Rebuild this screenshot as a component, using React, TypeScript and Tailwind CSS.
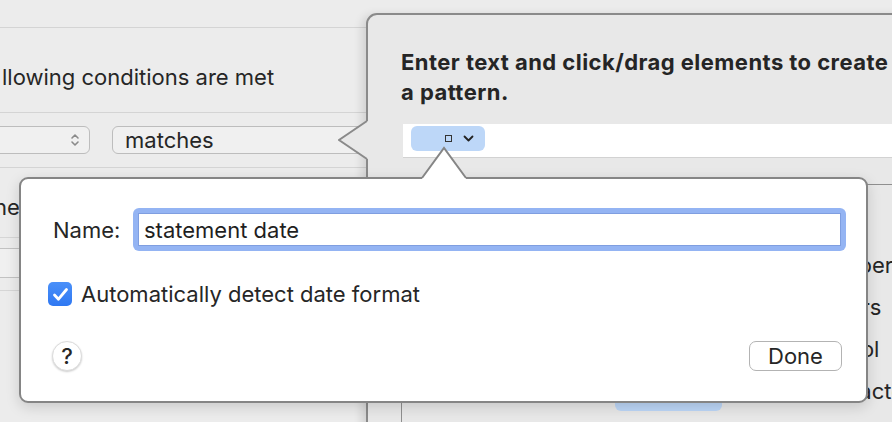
import React from 'react';

function Stepper() {
  return (
    <svg width="10" height="16" viewBox="0 0 10 16" fill="none" stroke="#8a8a8a" strokeWidth="1.6" strokeLinecap="round" strokeLinejoin="round">
      <path d="M2 6 L5 3 L8 6" />
      <path d="M2 10 L5 13 L8 10" />
    </svg>
  );
}

function PopoverOne() {
  return (
    <div className="absolute left-[366px] top-[13px] w-[560px] h-[430px] rounded-tl-[11px] border-2 border-[#8a8a8a] bg-[#e8e8e8] shadow-[-4px_2px_10px_rgba(0,0,0,0.12)]">
      <svg className="absolute left-[-30px] top-[105px]" width="34" height="40" viewBox="0 0 34 40">
        <polygon points="29,1 1,20 29,39 34,39 34,1" fill="#e8e8e8" />
        <polyline points="29,1 1,20 29,39" fill="none" stroke="#8a8a8a" strokeWidth="2" />
      </svg>
      <div className="pl-[33px] pt-[32px]">
        <div className="text-[22px] leading-[30px] font-bold tracking-[0.45px] text-[#252525] whitespace-nowrap">
          Enter text and click/drag elements to create
          <br />
          a pattern.
        </div>
        <div className="ml-[2px] mt-[17px] h-[34px] bg-white border-b border-[#d2d2d2] pl-[8px] pt-[2px]">
          <div className="w-[74px] h-[25px] rounded-[6px] bg-[#bdd7f8] flex items-center pl-[34px] gap-[11px]">
            <div className="w-[7px] h-[7px] border border-[#333]" />
            <svg width="11" height="7" viewBox="0 0 11 7" fill="none" stroke="#222" strokeWidth="1.8" strokeLinecap="round" strokeLinejoin="round">
              <path d="M1.5 1.5 L5.5 5.5 L9.5 1.5" />
            </svg>
          </div>
        </div>
        <div className="mt-[26px] h-[260px] border-l border-t border-[#8f8f8f] flex items-start">
          <div className="ml-[213px] mt-[200px] w-[110px] h-[26px] rounded-[6px] bg-[#bdd7f8]" />
          <div className="ml-[88px] pt-[59px] text-[22px] leading-[42px] text-[#252525] whitespace-nowrap">
            <div>Number</div>
            <div>Letters</div>
            <div className="-ml-[8px]">Symbol</div>
            <div>Characters</div>
          </div>
        </div>
      </div>
    </div>
  );
}

function PopoverTwo() {
  return (
    <div className="absolute left-[19px] top-[177px] w-[849px] h-[226px] rounded-[9px] border-2 border-[#858585] bg-white shadow-[0_4px_14px_rgba(0,0,0,0.15)]">
      <svg className="absolute left-[399px] top-[-33px]" width="48" height="37" viewBox="0 0 48 37">
        <polygon points="2,32 24,2 46,32 46,37 2,37" fill="#ffffff" />
        <polyline points="2,32 24,2 46,32" fill="none" stroke="#858585" strokeWidth="2" />
      </svg>
      <div className="pt-[29px] pl-[32px] flex items-center">
        <div className="w-[80px] text-[22px] leading-[26px] text-[#262626]">Name:</div>
        <div className="w-[713px] h-[43px] rounded-[6px] bg-[#94b4f3] p-[5px]">
          <div className="h-full bg-white border border-[#7f9ee0] pl-[5px] flex items-center text-[22px] leading-[26px] text-[#1f1f1f]">
            statement date
          </div>
        </div>
      </div>
      <div className="mt-[31px] ml-[27px] flex items-center gap-[9px]">
        <div className="w-[24px] h-[24px] rounded-[5px] bg-gradient-to-b from-[#4a90f9] to-[#2f78f2] flex items-center justify-center">
          <svg width="17" height="15" viewBox="0 0 17 15" fill="none" stroke="#ffffff" strokeWidth="2.8" strokeLinecap="round" strokeLinejoin="round">
            <path d="M2.5 8 L6.5 12.2 L14.5 2.5" />
          </svg>
        </div>
        <div className="text-[22px] leading-[24px] text-[#262626]">Automatically detect date format</div>
      </div>
      <div className="mt-[35px] pl-[31px] pr-[24px] flex items-center justify-between">
        <div className="w-[30px] h-[30px] rounded-full bg-white border border-[#dcdcdc] shadow-[0_1px_2px_rgba(0,0,0,0.2)] flex items-center justify-center text-[22px] leading-[24px] font-medium text-[#262626]">
          ?
        </div>
        <div className="w-[93px] h-[30px] rounded-[7px] border-[1.5px] border-[#b3b3b3] bg-white flex items-center justify-center text-[22px] leading-[24px] text-[#262626]">
          Done
        </div>
      </div>
    </div>
  );
}

export default function App() {
  return (
    <div className="relative w-[892px] h-[422px] overflow-hidden bg-[#ececec] font-['Inter','Noto_Sans',sans-serif]">
      <div className="w-[366px] flex flex-col">
        <div className="h-[28px] border-b border-[#d4d4d4]" />
        <div className="h-[85px] border-b border-[#d4d4d4] pt-[37px] pl-[2px] text-[22px] leading-[24px] text-[#262626] whitespace-nowrap">
          llowing conditions are met
        </div>
        <div className="h-[55px] border-b border-[#d4d4d4] flex items-center">
          <div className="-ml-[10px] w-[103px] h-[28px] rounded-[6px] border border-[#bdbdbd] bg-[#f0f0f0] flex items-center justify-end pr-[9px]">
            <Stepper />
          </div>
          <div className="ml-[22px] w-[262px] h-[28px] rounded-[6px] border border-[#bdbdbd] bg-[#f0f0f0] pl-[12px] flex items-center text-[22px] leading-[24px] text-[#262626]">
            matches
          </div>
        </div>
        <div className="h-[70px] border-b border-[#d6d6d6] pt-[27px] -ml-[6px] text-[22px] leading-[24px] text-[#262626]">
          ne
        </div>
        <div className="h-[11px] border-b border-[#c2c2c2]" />
        <div className="h-[29px] border-b border-[#c2c2c2] bg-[#f0f0f0]" />
        <div className="h-[13px] border-b border-[#d6d6d6]" />
      </div>
      <PopoverOne />
      <PopoverTwo />
    </div>
  );
}
